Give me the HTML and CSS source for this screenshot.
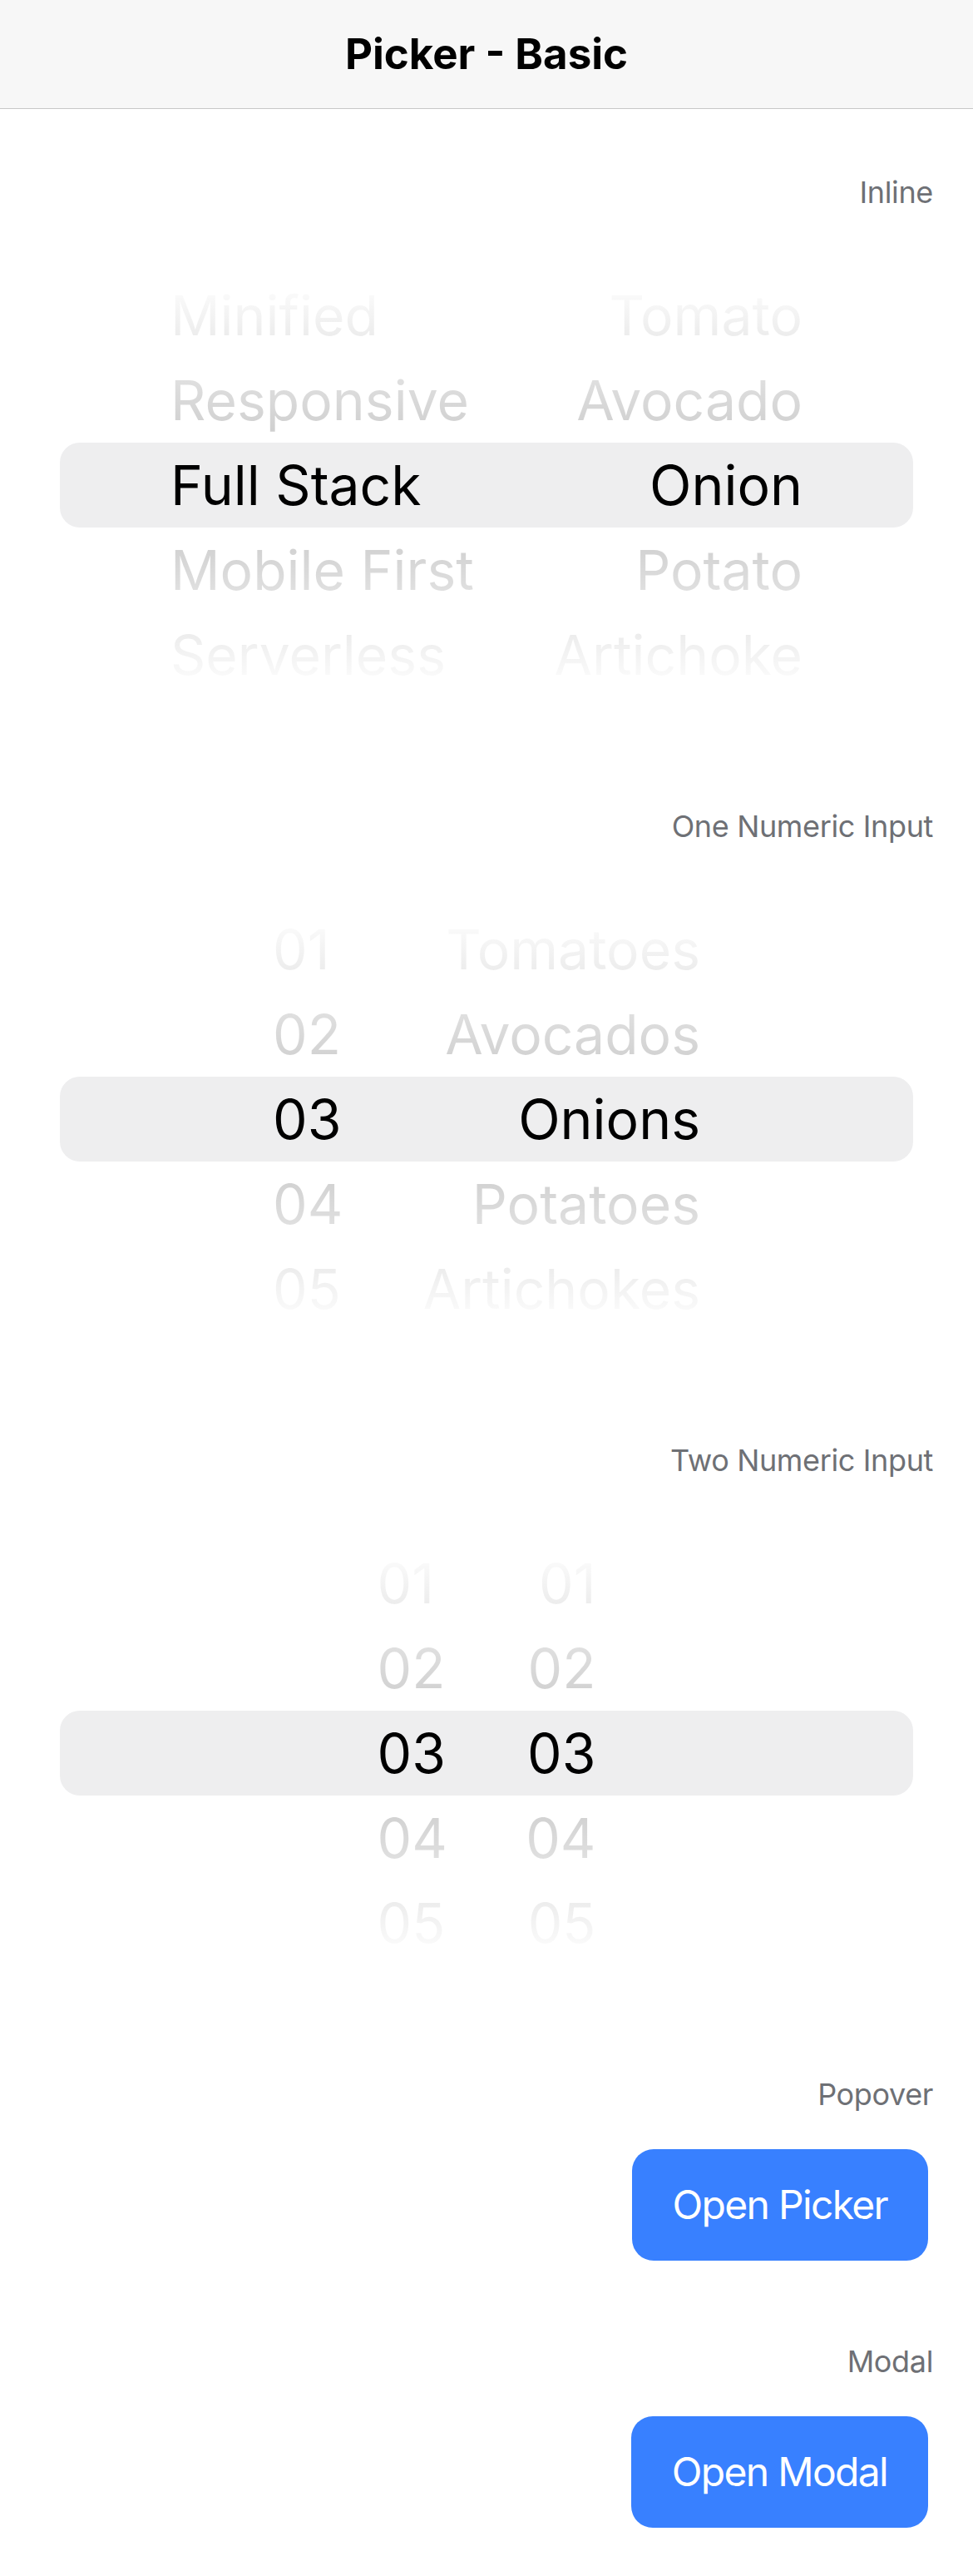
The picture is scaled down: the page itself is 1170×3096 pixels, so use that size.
FILE: index.html
```html
<!DOCTYPE html>
<html lang="en">
<head>
<meta charset="utf-8">
<title>Picker - Basic</title>
<link rel="stylesheet" href="styles.css">
</head>
<body>
<header class="toolbar">
  <h1 class="title">Picker - Basic</h1>
</header>
<main class="content">
  <section class="section">
    <div class="section-label">Inline</div>
    <div class="picker picker-1">
      <div class="picker-row"><span class="cell cell-a">Minified</span><span class="cell cell-b">Tomato</span></div>
      <div class="picker-row"><span class="cell cell-a">Responsive</span><span class="cell cell-b">Avocado</span></div>
      <div class="picker-row selected"><span class="cell cell-a">Full Stack</span><span class="cell cell-b">Onion</span></div>
      <div class="picker-row"><span class="cell cell-a">Mobile First</span><span class="cell cell-b">Potato</span></div>
      <div class="picker-row"><span class="cell cell-a">Serverless</span><span class="cell cell-b">Artichoke</span></div>
    </div>
  </section>

  <section class="section">
    <div class="section-label">One Numeric Input</div>
    <div class="picker picker-2">
      <div class="picker-row"><span class="cell cell-a">01</span><span class="cell cell-b">Tomatoes</span></div>
      <div class="picker-row"><span class="cell cell-a">02</span><span class="cell cell-b">Avocados</span></div>
      <div class="picker-row selected"><span class="cell cell-a">03</span><span class="cell cell-b">Onions</span></div>
      <div class="picker-row"><span class="cell cell-a">04</span><span class="cell cell-b">Potatoes</span></div>
      <div class="picker-row"><span class="cell cell-a">05</span><span class="cell cell-b">Artichokes</span></div>
    </div>
  </section>

  <section class="section">
    <div class="section-label">Two Numeric Input</div>
    <div class="picker picker-3">
      <div class="picker-row"><span class="cell cell-a">01</span><span class="cell cell-b">01</span></div>
      <div class="picker-row"><span class="cell cell-a">02</span><span class="cell cell-b">02</span></div>
      <div class="picker-row selected"><span class="cell cell-a">03</span><span class="cell cell-b">03</span></div>
      <div class="picker-row"><span class="cell cell-a">04</span><span class="cell cell-b">04</span></div>
      <div class="picker-row"><span class="cell cell-a">05</span><span class="cell cell-b">05</span></div>
    </div>
  </section>

  <section class="section section-button">
    <div class="section-label">Popover</div>
    <div class="button-row"><button class="button" type="button">Open Picker</button></div>
  </section>

  <section class="section section-button section-modal">
    <div class="section-label">Modal</div>
    <div class="button-row"><button class="button" type="button">Open Modal</button></div>
  </section>
</main>
</body>
</html>
```

FILE: styles.css
```css
* {
  box-sizing: border-box;
}

html,
body {
  margin: 0;
  padding: 0;
  background: #ffffff;
}

body {
  width: 1170px;
  font-family: Inter, "Liberation Sans", sans-serif;
  color: #000000;
}

.toolbar {
  height: 131px;
  background: #f7f7f7;
  border-bottom: 1px solid #c8c8c8;
  display: flex;
  align-items: center;
  justify-content: center;
}

.title {
  margin: 0;
  font-size: 51px;
  font-weight: 700;
  line-height: 1.2;
}

.content {
  padding: 78px 48px 0;
}

.section + .section {
  margin-top: 88px;
}

.section-modal {
  margin-top: 99px !important;
}

.section-label {
  font-size: 36px;
  line-height: 44px;
  text-align: right;
  color: #6e7075;
  letter-spacing: -0.01em;
}

.picker {
  position: relative;
  height: 600px;
  margin-top: 30px;
  padding: 45px 0;
  display: flex;
  flex-direction: column;
  overflow: hidden;
}

.picker::before,
.picker::after {
  content: "";
  position: absolute;
  left: 0;
  right: 0;
  height: 249px;
  pointer-events: none;
  z-index: 2;
}

.picker::before {
  top: 0;
  background: linear-gradient(to bottom, #ffffff 20%, rgba(255, 255, 255, 0.8) 100%);
}

.picker::after {
  bottom: 0;
  background: linear-gradient(to top, #ffffff 20%, rgba(255, 255, 255, 0.8) 100%);
}

.picker-row {
  flex: none;
  height: 102px;
  display: flex;
  justify-content: center;
  font-size: 66px;
  line-height: 102px;
  color: #000000;
}

.picker-row.selected {
  margin: 0 24px;
  background: #eeeeef;
  border-radius: 24px;
}

.cell {
  white-space: nowrap;
}

.cell-a {
  text-align: left;
}

.cell-b {
  text-align: right;
}

.picker-1 .cell-a { width: 420px; }
.picker-1 .cell-b { width: 340px; }

.picker-2 .cell-a { width: 160px; }
.picker-2 .cell-b { width: 354px; }

.picker-3 .cell-a { width: 132px; }
.picker-3 .cell-b { width: 131px; }

.button-row {
  margin-top: 44px;
  display: flex;
  justify-content: flex-end;
  padding-right: 6px;
}

.button {
  height: 134px;
  padding: 0 49px;
  border: 0;
  border-radius: 26px;
  background: #3880ff;
  color: #ffffff;
  font-family: Inter, "Liberation Sans", sans-serif;
  font-size: 48px;
  font-weight: 400;
  letter-spacing: -0.035em;
  line-height: 1;
}
```
